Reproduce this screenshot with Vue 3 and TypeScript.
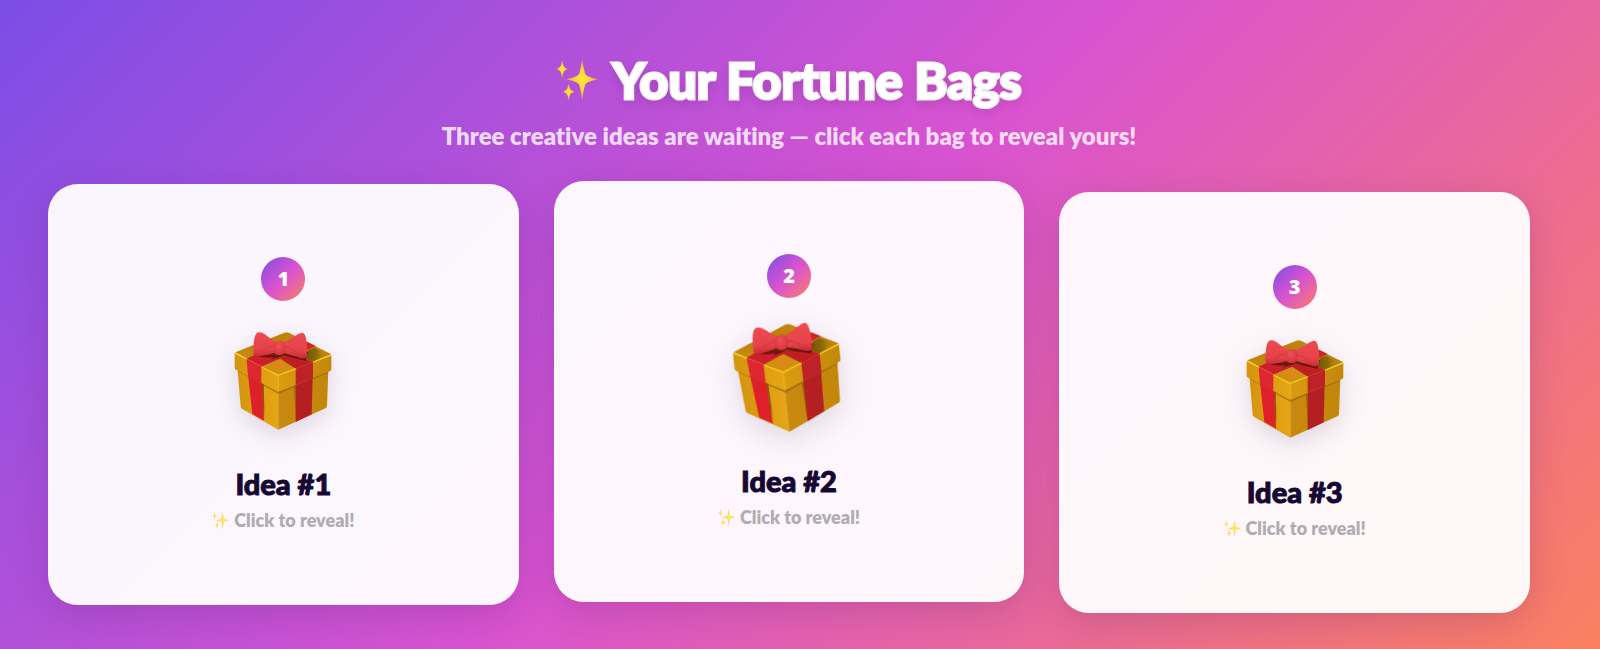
<script setup lang="ts">
import { ref } from 'vue'

interface Bag {
  id: number
  phase: 'mid' | 'high' | 'low'
}

const bags: Bag[] = [
  { id: 1, phase: 'mid' },
  { id: 2, phase: 'high' },
  { id: 3, phase: 'low' },
]

const selected = ref<number | null>(null)
</script>

<template>
  <main class="page">
    <svg class="defs" width="0" height="0" aria-hidden="true">
      <defs>
        <radialGradient id="spark" cx="50%" cy="50%" r="50%">
          <stop offset="0" stop-color="#ffe63b" />
          <stop offset="0.45" stop-color="#fdd835" />
          <stop offset="1" stop-color="#ee9a3a" />
        </radialGradient>
        <linearGradient id="lidTop" x1="0" y1="1" x2="1" y2="0">
          <stop offset="0" stop-color="#d89a10" />
          <stop offset="0.5" stop-color="#b97c0c" />
          <stop offset="1" stop-color="#c98c10" />
        </linearGradient>
        <linearGradient id="shade" x1="0" y1="0" x2="1" y2="0">
          <stop offset="0" stop-color="#6b5205" />
          <stop offset="0.5" stop-color="#8a6a08" />
          <stop offset="1" stop-color="#c08a0c" stop-opacity="0" />
        </linearGradient>
        <linearGradient id="frontL" x1="0" y1="0" x2="1" y2="0">
          <stop offset="0" stop-color="#d4940f" />
          <stop offset="1" stop-color="#e6a514" />
        </linearGradient>
        <linearGradient id="frontR" x1="0" y1="0" x2="1" y2="0">
          <stop offset="0" stop-color="#c9880f" />
          <stop offset="1" stop-color="#c2870a" />
        </linearGradient>
        <linearGradient id="lidR" x1="0" y1="0" x2="1" y2="0">
          <stop offset="0" stop-color="#dc9c10" />
          <stop offset="1" stop-color="#c2870a" />
        </linearGradient>
        <radialGradient id="glow">
          <stop offset="0" stop-color="#f47a18" />
          <stop offset="1" stop-color="#e08d12" stop-opacity="0" />
        </radialGradient>
        <linearGradient id="wing" x1="0" y1="0" x2="0" y2="1">
          <stop offset="0" stop-color="#ee4a50" />
          <stop offset="0.7" stop-color="#e6424a" />
          <stop offset="1" stop-color="#c62c36" />
        </linearGradient>
        <radialGradient id="knot" cx="45%" cy="35%" r="65%">
          <stop offset="0" stop-color="#f0505a" />
          <stop offset="1" stop-color="#d4343e" />
        </radialGradient>
        <symbol id="sparkles" viewBox="408 56 130 130">
          <path fill="url(#spark)" d="M489 57Q493 84 498 102Q502 112 538 119Q502 126 498 136Q493 154 489 184Q485 154 480 136Q476 126 439 119Q476 112 480 102Q485 84 489 57Z" />
          <path fill="url(#spark)" d="M427 58Q430 78 434 81Q437 84 445 87Q437 90 434 93Q430 96 427 116Q424 96 420 93Q417 90 409 87Q417 84 420 81Q424 78 427 58Z" />
          <path fill="url(#spark)" d="M447 131Q450 148 454 151Q457 154 466 157Q457 160 454 163Q450 166 447 185Q444 166 440 163Q437 160 429 157Q437 154 440 151Q444 148 447 131Z" />
        </symbol>
        <symbol id="gift" viewBox="102 272 300 300">
          <path fill="url(#frontL)" d="M115 380L238 440V568L130 506Q125 503 125 498Z" />
          <path fill="url(#frontR)" d="M238 440L388 390L384 496Q384 501 379 504L238 568Z" />
          <path fill="#8d5908" opacity=".55" d="M116 387L238 452L386 393V399L238 461L117 393Z" />
          <path fill="#dd2029" d="M147 402L188 424L195 541L160 521Z" />
          <path fill="#6f3a07" opacity=".75" d="M188 426L194 429L196 500L195 541Z" />
          <path fill="#b41f22" d="M290 430L341 410L338 522L290 545Z" />
          <path fill="#8a520a" opacity=".7" d="M285 440L290 438V535Z" />
          <path fill="url(#lidTop)" d="M109 336L256 277Q263 274 270 277L397 342L238 406Z" />
          <path fill="url(#shade)" d="M316 352L328 330L346 322L386 343L342 364Z" />
          <path fill="#d3222b" d="M318 306L326 305L350 317L326 328L316 322Z" />
          <path fill="#cb2029" d="M143 355L172 342L262 348L187 379Z" />
          <path fill="#c01e24" d="M290 386L225 350L300 346L342 365Z" />
          <path fill="#5e1009" opacity=".85" d="M165 345Q200 356 224 349L214 358Q235 351 254 346L320 361L327 335L250 326Z" />
          <path fill="#cf8e14" d="M190 378L244 355L290 385L238 406Z" />
          <ellipse cx="240" cy="378" rx="27" ry="15" fill="url(#glow)" />
          <path fill="url(#frontL)" d="M107 338L238 405V455L111 388Q107 386 107 382Z" />
          <path fill="url(#lidR)" d="M238 405L397 345V386Q397 391 392 393L238 455Z" />
          <path fill="#dd2830" d="M143 356L187 378V431L147 409Z" />
          <path fill="#be2226" d="M290 385L342 365V413L290 434Z" />
          <path fill="none" stroke="#f5c91a" stroke-width="4" stroke-linejoin="round" d="M109 339L143 356M188 380L238 405L290 385M343 365L395 345" />
          <path fill="none" stroke="#efb91a" stroke-width="2" d="M238 406V452" />
          <path fill="none" stroke="#e94a51" stroke-width="3" d="M144 356L187 378" />
          <path fill="url(#wing)" d="M230 304C211 298 199 275 179 276C167 278 164 297 163 337C163 345 171 350 183 348C205 343 216 343 231 335Z" />
          <path fill="url(#wing)" d="M252 305C272 302 293 279 310 277C321 277 326 309 324 347C323 357 308 355 295 350C280 343 267 342 253 337Z" />
          <path fill="none" stroke="#c22c36" stroke-width="4" opacity=".4" d="M190 331Q208 318 229 316M256 319Q281 325 297 339" />
          <rect x="224" y="303" width="35" height="41" rx="15" fill="url(#knot)" />
        </symbol>
      </defs>
    </svg>

    <header class="heading">
      <h1 class="title">
        <svg class="title-icon" aria-hidden="true"><use href="#sparkles" /></svg>
        <span>Your Fortune Bags</span>
      </h1>
      <p class="subtitle">Three creative ideas are waiting — click each bag to reveal yours!</p>
    </header>

    <section class="bags" aria-label="Fortune bags">
      <button
        v-for="bag in bags"
        :key="bag.id"
        type="button"
        class="bag"
        :class="bag.phase"
        :aria-pressed="selected === bag.id"
        @click="selected = bag.id"
      >
        <span class="badge">{{ bag.id }}</span>
        <svg class="gift" aria-hidden="true"><use href="#gift" /></svg>
        <span class="name">Idea #{{ bag.id }}</span>
        <span class="hint">
          <svg class="hint-icon" aria-hidden="true"><use href="#sparkles" /></svg>
          Click to reveal!
        </span>
      </button>
    </section>
  </main>
</template>

<style>
body {
  margin: 0;
}
</style>

<style scoped>
.page {
  box-sizing: border-box;
  min-height: 100vh;
  padding: 54px 70px 34px 48px;
  background: linear-gradient(135deg, #7c4de6 0%, #d953d0 50%, #fc8060 100%);
  font-family: Lato, 'Noto Sans', sans-serif;
  font-variant-ligatures: none;
}

.defs {
  position: absolute;
}

.heading {
  text-align: center;
}

.title {
  display: flex;
  align-items: center;
  justify-content: center;
  gap: 14px;
  margin: 0;
  color: #fff;
  font-size: 50px;
  font-weight: 900;
  line-height: 52px;
  -webkit-text-stroke: 3px #fff;
  paint-order: stroke fill;
  stroke-linejoin: round;
  text-shadow: 0 4px 12px rgba(0, 0, 0, 0.16);
}

.title-icon {
  width: 42px;
  height: 42px;
}

.subtitle {
  margin: 14px 0 0;
  color: rgba(255, 255, 255, 0.8);
  font-size: 24px;
  font-weight: 800;
  line-height: 32px;
}

.bags {
  display: grid;
  grid-template-columns: repeat(3, 1fr);
  align-items: start;
  gap: 35px;
  margin-top: 32px;
}

.bag {
  display: flex;
  flex-direction: column;
  align-items: center;
  padding: 73px 24px;
  border: 0;
  border-radius: 30px;
  background: rgba(255, 255, 255, 0.95);
  box-shadow: 0 10px 36px rgba(60, 20, 90, 0.18);
  font-family: inherit;
  font-variant-ligatures: inherit;
  cursor: pointer;
}

.bag.mid {
  transform: translateY(0);
}

.bag.high {
  transform: translateY(-3px);
}

.bag.low {
  transform: translateY(8px);
}

.badge {
  width: 44px;
  height: 44px;
  border-radius: 50%;
  background: linear-gradient(135deg, #7c4de6 0%, #d953d0 50%, #fc8060 100%);
  color: #fff;
  font-family: 'Open Sans', sans-serif;
  font-size: 20px;
  font-weight: 800;
  line-height: 44px;
}

.gift {
  width: 100px;
  height: 100px;
  margin-top: 30px;
  filter: drop-shadow(0 8px 12px rgba(40, 20, 60, 0.14));
}

.high .gift {
  transform: rotate(-6deg) scale(1.1);
}

.name {
  margin-top: 35px;
  color: #160733;
  font-size: 29px;
  font-weight: 900;
  line-height: 36px;
  -webkit-text-stroke: 1px #160733;
}

.hint {
  display: flex;
  align-items: center;
  gap: 5px;
  margin-top: 6px;
  color: #b0adb2;
  font-size: 18px;
  font-weight: 800;
  line-height: 24px;
}

.hint-icon {
  width: 17px;
  height: 17px;
  opacity: 0.8;
}
</style>
